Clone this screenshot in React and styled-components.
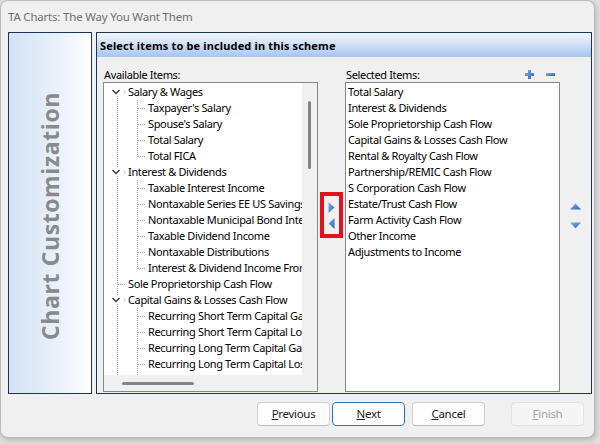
import React from "react";
import styled, { createGlobalStyle } from "styled-components";

const FONT = `"Noto Sans", "Open Sans", sans-serif`;

const GlobalStyle = createGlobalStyle`
  html, body {
    margin: 0;
    padding: 0;
    background: #dedede;
  }
  body {
    font-family: ${FONT};
    font-size: 11px;
    letter-spacing: -0.35px;
    color: #000;
  }
`;

const Screen = styled.div`
  width: 600px;
  height: 444px;
  overflow: hidden;
`;

const Window = styled.div`
  box-sizing: border-box;
  width: 595px;
  height: 438px;
  display: flex;
  flex-direction: column;
  background: #f0f0f0;
  border: 1px solid #b9b9b9;
  border-radius: 8px;
  box-shadow: 1px 2px 5px rgba(0, 0, 0, 0.18);
`;

const TitleBar = styled.div`
  height: 32px;
  display: flex;
  align-items: center;
  padding-left: 7px;
  color: #6f6f6f;
  font-size: 11.5px;
  letter-spacing: -0.2px;
`;

const Body = styled.div`
  height: 368px;
  display: flex;
  gap: 4px;
  padding: 0 2px 0 7px;
`;

const Sidebar = styled.div`
  box-sizing: border-box;
  width: 84px;
  border: 1px solid #1b355f;
  background: linear-gradient(to right, #d3e2f4 0%, #eef4fb 70%, #ffffff 100%);
  display: flex;
  align-items: center;
  justify-content: center;
`;

const SideTitle = styled.div`
  writing-mode: vertical-rl;
  transform: rotate(180deg);
  margin-top: 6px;
  font-family: "Open Sans", "Noto Sans", sans-serif;
  font-size: 23px;
  font-weight: 700;
  color: #8a8a8a;
  letter-spacing: 0.6px;
`;

const Panel = styled.div`
  box-sizing: border-box;
  flex: 1;
  border: 1px solid #1b355f;
  background: #f0f0f0;
  display: flex;
  flex-direction: column;
`;

const PanelHeader = styled.div`
  height: 24px;
  display: flex;
  align-items: center;
  padding-left: 3px;
  font-weight: 700;
  letter-spacing: 0.15px;
  background: linear-gradient(to bottom, #f3f7fd 0%, #d2e2f7 45%, #a7c5ee 100%);
`;

const Content = styled.div`
  display: grid;
  grid-template-columns: 215px 27px 215px 1fr;
  grid-template-rows: 16px 310px;
  padding: 9px 0 0 6px;
`;

const Label = styled.div`
  display: flex;
  align-items: center;
  justify-content: space-between;
  padding: 0 5px 0 1px;
`;

const Tools = styled.div`
  display: flex;
  align-items: center;
  gap: 12px;
`;

const ListBox = styled.div`
  box-sizing: border-box;
  border: 1px solid #828790;
  background: #fff;
  overflow: hidden;
`;

const TreeBox = styled(ListBox)`
  display: grid;
  grid-template-columns: 1fr 15px;
  grid-template-rows: 1fr 16px;
`;

const TreeArea = styled.div`
  overflow: hidden;
  padding-top: 1px;
`;

const Row = styled.div`
  display: flex;
  align-items: center;
  height: 16px;
  white-space: nowrap;
  line-height: 16px;
`;

const VScroll = styled.div`
  background: #f0f0f0;
  padding-top: 18px;
  display: flex;
  justify-content: center;
`;

const HScroll = styled.div`
  background: #f0f0f0;
  padding-left: 18px;
  display: flex;
  align-items: center;
`;

const Corner = styled.div`
  background: #f0f0f0;
`;

const Thumb = styled.div`
  background: #858585;
  border-radius: 2px;
  width: ${(p) => (p.$vertical ? "3px" : p.$size)};
  height: ${(p) => (p.$vertical ? p.$size : "3px")};
`;

const SelectedArea = styled.div`
  padding: 1px 0 0 2px;
`;

const Middle = styled.div`
  display: flex;
  justify-content: center;
  padding-top: 110px;
`;

const Marker = styled.div`
  box-sizing: border-box;
  width: 23px;
  height: 46px;
  border: 4px solid #e3121d;
  display: flex;
  flex-direction: column;
  align-items: center;
  justify-content: center;
  gap: 5px;
`;

const Movers = styled.div`
  display: flex;
  flex-direction: column;
  align-items: center;
  gap: 12px;
  padding-top: 121px;
`;

const Footer = styled.div`
  height: 36px;
  display: flex;
  align-items: flex-start;
  justify-content: flex-end;
  padding: 8px 10px 0 0;
`;

const Button = styled.button`
  box-sizing: border-box;
  width: 73px;
  height: 24px;
  margin-left: ${(p) => p.$gap || 0}px;
  border-radius: 4px;
  font-family: ${FONT};
  font-size: 11.5px;
  letter-spacing: -0.3px;
  padding: 0;
  color: ${(p) => (p.disabled ? "#a3a3a3" : "#1a1a1a")};
  background: ${(p) => (p.disabled ? "#f5f5f5" : "#fdfdfd")};
  border: 1px solid
    ${(p) => (p.$primary ? "#2a74c4" : p.disabled ? "#e3e3e3" : "#d0d0d0")};
  border-bottom-color: ${(p) =>
    p.$primary ? "#2a74c4" : p.disabled ? "#e3e3e3" : "#bcbcbc"};
`;

const blue = (id) => (
  <linearGradient id={id} x1="0" y1="0" x2="1" y2="1">
    <stop offset="0" stopColor="#8cb4ea" />
    <stop offset="1" stopColor="#2a5db4" />
  </linearGradient>
);

function PlusIcon() {
  return (
    <svg width="9" height="9" viewBox="0 0 9 9">
      <defs>{blue("gp")}</defs>
      <path d="M3 0h3v3h3v3H6v3H3V6H0V3h3z" fill="url(#gp)" />
    </svg>
  );
}

function MinusIcon() {
  return (
    <svg width="9" height="9" viewBox="0 0 9 9">
      <defs>{blue("gm")}</defs>
      <rect x="0" y="3" width="9" height="3" fill="url(#gm)" />
    </svg>
  );
}

function Triangle({ dir }) {
  const id = "gt" + dir;
  const shapes = {
    right: { w: 7, h: 11, d: "M0.5 0L6.5 5.5L0.5 11z" },
    left: { w: 7, h: 11, d: "M6.5 0L0.5 5.5L6.5 11z" },
    up: { w: 11, h: 7, d: "M0 6.5L5.5 0.5L11 6.5z" },
    down: { w: 11, h: 7, d: "M0 0.5L5.5 6.5L11 0.5z" },
  };
  const s = shapes[dir];
  return (
    <svg width={s.w} height={s.h} viewBox={`0 0 ${s.w} ${s.h}`}>
      <defs>{blue(id)}</defs>
      <path d={s.d} fill={`url(#${id})`} />
    </svg>
  );
}

// dotted tree guides drawn per row
function Guide({ kind, first, last }) {
  const dot = { stroke: "#9c9c9c", strokeWidth: 1, strokeDasharray: "1 1", shapeRendering: "crispEdges" };
  const width = kind === "child" ? 44 : 24;
  return (
    <svg width={width} height="16" viewBox={`0 0 ${width} 16`} style={{ flexShrink: 0 }}>
      {kind === "group" && (
        <>
          {!first && <line x1="13.5" y1="0" x2="13.5" y2="4" {...dot} />}
          <line x1="13.5" y1="12" x2="13.5" y2="16" {...dot} />
          <polyline points="8.5,6 12,9.5 15.5,6" fill="none" stroke="#333" strokeWidth="1.3" />
          <line x1="20" y1="8.5" x2="22" y2="8.5" {...dot} />
        </>
      )}
      {kind === "leaf" && (
        <>
          <line x1="13.5" y1="0" x2="13.5" y2="16" {...dot} />
          <line x1="14" y1="8.5" x2="22" y2="8.5" {...dot} />
        </>
      )}
      {kind === "child" && (
        <>
          <line x1="13.5" y1="0" x2="13.5" y2="16" {...dot} />
          <line x1="33.5" y1="0" x2="33.5" y2={last ? 9 : 16} {...dot} />
          <line x1="34" y1="8.5" x2="42" y2="8.5" {...dot} />
        </>
      )}
    </svg>
  );
}

const tree = [
  {
    label: "Salary & Wages",
    children: ["Taxpayer's Salary", "Spouse's Salary", "Total Salary", "Total FICA"],
  },
  {
    label: "Interest & Dividends",
    children: [
      "Taxable Interest Income",
      "Nontaxable Series EE US Savings Bonds",
      "Nontaxable Municipal Bond Interest",
      "Taxable Dividend Income",
      "Nontaxable Distributions",
      "Interest & Dividend Income From Trusts",
    ],
  },
  { label: "Sole Proprietorship Cash Flow" },
  {
    label: "Capital Gains & Losses Cash Flow",
    children: [
      "Recurring Short Term Capital Gains",
      "Recurring Short Term Capital Losses",
      "Recurring Long Term Capital Gains",
      "Recurring Long Term Capital Losses",
      "Capital Gain Distributions",
    ],
  },
];

const rows = tree.flatMap((node, i) => {
  if (!node.children) return [{ kind: "leaf", label: node.label }];
  return [
    { kind: "group", label: node.label, first: i === 0 },
    ...node.children.map((c, j) => ({
      kind: "child",
      label: c,
      last: j === node.children.length - 1,
    })),
  ];
});

const selected = [
  "Total Salary",
  "Interest & Dividends",
  "Sole Proprietorship Cash Flow",
  "Capital Gains & Losses Cash Flow",
  "Rental & Royalty Cash Flow",
  "Partnership/REMIC Cash Flow",
  "S Corporation Cash Flow",
  "Estate/Trust Cash Flow",
  "Farm Activity Cash Flow",
  "Other Income",
  "Adjustments to Income",
];

export default function App() {
  return (
    <>
      <GlobalStyle />
      <Screen>
        <Window>
          <TitleBar>TA Charts: The Way You Want Them</TitleBar>
          <Body>
            <Sidebar>
              <SideTitle>Chart Customization</SideTitle>
            </Sidebar>
            <Panel>
              <PanelHeader>Select items to be included in this scheme</PanelHeader>
              <Content>
                <Label>Available Items:</Label>
                <div />
                <Label>
                  Selected Items:
                  <Tools>
                    <PlusIcon />
                    <MinusIcon />
                  </Tools>
                </Label>
                <div />
                <TreeBox>
                  <TreeArea>
                    {rows.map((r, i) => (
                      <Row key={i}>
                        <Guide kind={r.kind} first={r.first} last={r.last} />
                        {r.label}
                      </Row>
                    ))}
                  </TreeArea>
                  <VScroll>
                    <Thumb $vertical $size="68px" />
                  </VScroll>
                  <HScroll>
                    <Thumb $size="72px" />
                  </HScroll>
                  <Corner />
                </TreeBox>
                <Middle>
                  <Marker>
                    <Triangle dir="right" />
                    <Triangle dir="left" />
                  </Marker>
                </Middle>
                <ListBox>
                  <SelectedArea>
                    {selected.map((s) => (
                      <Row key={s}>{s}</Row>
                    ))}
                  </SelectedArea>
                </ListBox>
                <Movers>
                  <Triangle dir="up" />
                  <Triangle dir="down" />
                </Movers>
              </Content>
            </Panel>
          </Body>
          <Footer>
            <Button>
              <u>P</u>revious
            </Button>
            <Button $primary $gap={2}>
              <u>N</u>ext
            </Button>
            <Button $gap={7}>
              <u>C</u>ancel
            </Button>
            <Button disabled $gap={26}>
              <u>F</u>inish
            </Button>
          </Footer>
        </Window>
      </Screen>
    </>
  );
}
